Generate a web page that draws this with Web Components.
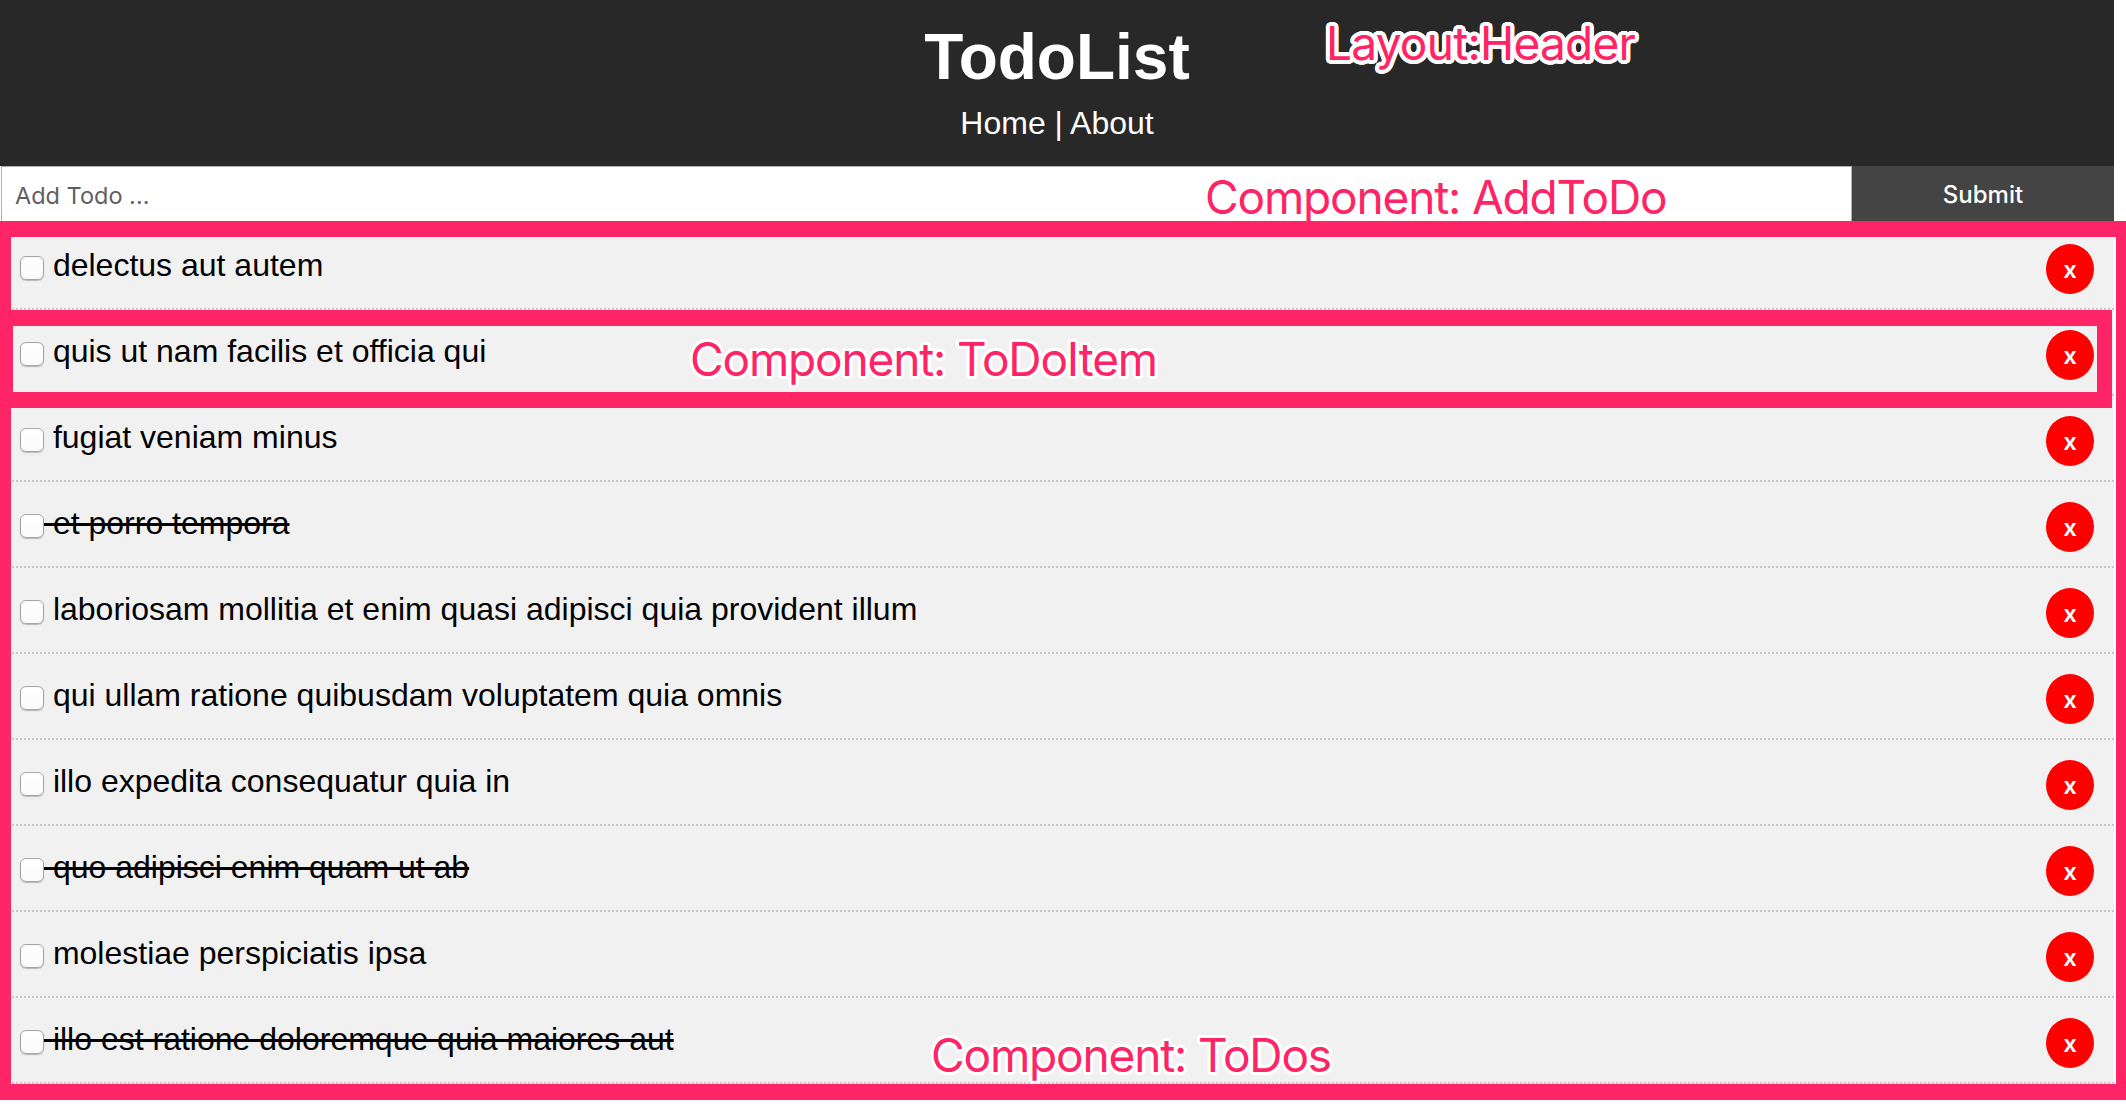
<!DOCTYPE html>
<html lang="en"><head><meta charset="utf-8"><title>TodoList</title>
<style>
html,body{margin:0;padding:0;background:#fff}
body{font-family:"Liberation Sans",Arial,sans-serif;height:1104px;overflow:hidden;position:relative}
</style></head>
<body>
<todo-app>
  <app-header></app-header>
  <add-todo></add-todo>
  <todo-list>
    <todo-item>delectus aut autem</todo-item>
    <todo-item>quis ut nam facilis et officia qui</todo-item>
    <todo-item>fugiat veniam minus</todo-item>
    <todo-item done>et porro tempora</todo-item>
    <todo-item>laboriosam mollitia et enim quasi adipisci quia provident illum</todo-item>
    <todo-item>qui ullam ratione quibusdam voluptatem quia omnis</todo-item>
    <todo-item>illo expedita consequatur quia in</todo-item>
    <todo-item done>quo adipisci enim quam ut ab</todo-item>
    <todo-item>molestiae perspiciatis ipsa</todo-item>
    <todo-item done>illo est ratione doloremque quia maiores aut</todo-item>
  </todo-list>
</todo-app>
<note-box style="left:-6px;top:221px;width:2132px;height:879px;--bl:17px;--br:10px"></note-box>
<note-box style="left:-6px;top:310px;width:2118px;height:98px;--bl:19px;--br:15px"></note-box>
<note-label style="left:1326px;top:16px" outlined>Layout:Header</note-label>
<note-label style="left:1205px;top:170px">Component: AddToDo</note-label>
<note-label style="left:690px;top:332px" halo>Component: ToDoItem</note-label>
<note-label style="left:931px;top:1028px" halo>Component: ToDos</note-label>
<script>
function ring(r,n){const a=[];for(let i=0;i<n;i++){const t=i/n*Math.PI*2;a.push((r*Math.cos(t)).toFixed(2)+"px "+(r*Math.sin(t)).toFixed(2)+"px 0 #fff");}return a.join(",");}
function def(name,html,init){
  customElements.define(name,class extends HTMLElement{
    constructor(){super();const r=this.attachShadow({mode:"open"});r.innerHTML=html;}
    connectedCallback(){if(init)init(this);}
  });
}
def("todo-app",`<style>:host{display:block;width:2114px}</style><slot></slot>`);
def("app-header",`<style>
:host{display:block;height:166px;background:#282828;color:#fff;text-align:center;box-sizing:border-box;padding-top:23px}
h1{margin:0;font:bold 64px/68px "Liberation Sans",Arial,sans-serif}
nav{margin-top:14px;font:32px/37px "Liberation Sans",Arial,sans-serif}
a{color:#fff;text-decoration:none}
</style><h1>TodoList</h1><nav><a href="#">Home</a> | <a href="#">About</a></nav>`);
def("add-todo",`<style>
:host{display:flex;height:58px}
input{flex:1;min-width:0;box-sizing:border-box;margin:0 0 0 1px;height:100%;padding:0 13px;border:1px solid #aeaeae;background:#fff;font:23.5px "Inter",sans-serif;outline:0}
input::placeholder{color:#5f5f5f;opacity:1}
button{width:262px;height:100%;margin:0;border:0;background:#444;color:#fff;font:500 24px "Inter",sans-serif;padding:0 0 1px}
</style><input type="text" placeholder="Add Todo ..." aria-label="Add Todo"><button type="button">Submit</button>`);
def("todo-list",`<style>:host{display:block;background:#f1f1f1}</style><slot></slot>`);
def("todo-item",`<style>
:host{display:flex;justify-content:space-between;align-items:flex-start;height:86px;box-sizing:border-box;background:#f1f1f1;padding:23px 20px 0 20px;border-bottom:2px dotted #c8c8c8;color:#000;font:32px/37px "Liberation Sans",Arial,sans-serif}
p{margin:0;white-space:pre}
:host([done]) p{text-decoration:line-through}
input{appearance:none;-webkit-appearance:none;box-sizing:border-box;width:24px;height:24px;margin:0;vertical-align:-4px;background:linear-gradient(#fff,#fafafa);border:1px solid #a4a4a4;border-radius:6px;box-shadow:0 1px 1px #bbb}
button{width:48px;height:50px;margin:-3px 0 0;border:0;padding:0;border-radius:50%;background:#fe0000;color:#fff;font:600 24px "Inter",sans-serif;flex:none}
</style><p><input type="checkbox" aria-label="done"> <slot></slot></p><button type="button">x</button>`);
def("note-box",`<style>
:host{position:absolute;display:block;box-sizing:border-box;border:16px solid #fe2465;border-left-width:var(--bl);border-right-width:var(--br);pointer-events:none}
</style>`);
def("note-label",`<style>
:host{position:absolute;display:block;color:#fe2465;font:46px/54px "Inter","Liberation Sans",sans-serif;letter-spacing:-1.15px;white-space:nowrap}
:host([halo]){text-shadow:${ring(3,16)}}
:host([outlined]){letter-spacing:-.75px;text-shadow:${ring(4,24)},${ring(2,12)}}
</style><slot></slot>`);
</script>
</body></html>
